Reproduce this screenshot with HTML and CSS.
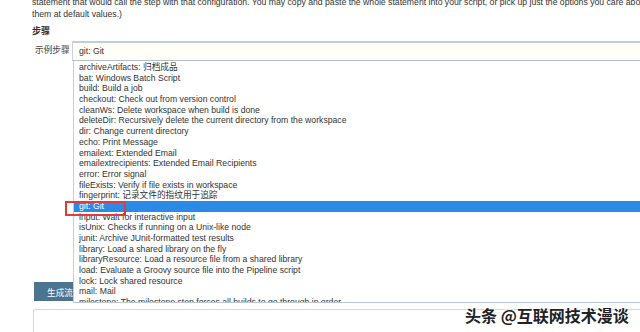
FILE: index.html
```html
<!DOCTYPE html>
<html lang="zh-CN">
<head>
    <meta charset="UTF-8">
    <title>Snippet Generator</title>
    <link rel="stylesheet" href="styles.css">
</head>
<body>
    <div class="page">
        <!-- 说明文字 -->
        <p class="intro">
            statement that would call the step with that configuration. You may copy and paste the whole statement into your script, or pick up just the options you care about. (Most parameters are optional)<br>
            them at default values.)
        </p>

        <div class="section-title">步骤</div>

        <!-- 示例步骤 选择框 -->
        <div class="step-row">
            <div class="step-label">示例步骤</div>
            <div class="step-select">git: Git</div>
        </div>

        <button class="gen-btn">生成流水线脚本</button>
        <div class="script-box"></div>
    </div>

    <!-- 下拉列表 -->
    <ul class="dropdown">
        <li>archiveArtifacts: 归档成品</li>
        <li>bat: Windows Batch Script</li>
        <li>build: Build a job</li>
        <li>checkout: Check out from version control</li>
        <li>cleanWs: Delete workspace when build is done</li>
        <li>deleteDir: Recursively delete the current directory from the workspace</li>
        <li>dir: Change current directory</li>
        <li>echo: Print Message</li>
        <li>emailext: Extended Email</li>
        <li>emailextrecipients: Extended Email Recipients</li>
        <li>error: Error signal</li>
        <li>fileExists: Verify if file exists in workspace</li>
        <li>fingerprint: 记录文件的指纹用于追踪</li>
        <li class="selected">git: Git</li>
        <li>input: Wait for interactive input</li>
        <li>isUnix: Checks if running on a Unix-like node</li>
        <li>junit: Archive JUnit-formatted test results</li>
        <li>library: Load a shared library on the fly</li>
        <li>libraryResource: Load a resource file from a shared library</li>
        <li>load: Evaluate a Groovy source file into the Pipeline script</li>
        <li>lock: Lock shared resource</li>
        <li>mail: Mail</li>
        <li>milestone: The milestone step forces all builds to go through in order</li>
    </ul>

    <!-- 红色标注框 -->
    <div class="mark"></div>

    <div class="watermark">头条 @互联网技术漫谈</div>
</body>
</html>
```

FILE: styles.css
```css
/* 전체 */
body {
    margin: 0;
    width: 640px;
    height: 332px;
    overflow: hidden;
    position: relative;
    background: #fff;
    font-family: "Liberation Sans", Arial, "Noto Sans CJK SC", sans-serif;
    font-size: 8.67px;
    color: #333;
}

.page {
    padding-left: 32px;
}

.intro {
    margin: -4.5px 0 0 0;
    line-height: 12px;
    white-space: nowrap;
}

.section-title {
    margin-top: 5.5px;
    line-height: 12px;
    font-weight: bold;
    font-size: 9px;
}

/* 示例步骤 */
.step-row {
    display: flex;
    margin-top: 4px;
}

.step-label {
    width: 37px;
    padding: 3px 0 0 3px;
    line-height: 12px;
    color: #444;
}

.step-select {
    flex: 1;
    height: 17px;
    line-height: 17px;
    padding-left: 6px;
    border-top: 2px solid #bccfdb;
    border-bottom: 1px solid #b3bec8;
    border-left: 1px solid #c9d4dc;
    background: #fffff8;
    margin-right: -10px;
}

/* 生成按钮 */
.gen-btn {
    display: block;
    margin: 221px 0 0 2px;
    width: 88px;
    height: 19px;
    border: none;
    padding: 0 0 0 13px;
    text-align: left;
    background: #4b7490;
    color: #fff;
    font-family: "Noto Sans CJK SC", sans-serif;
    font-size: 8.67px;
}

.script-box {
    margin: 8px -10px 0 1px;
    height: 40px;
    border: 1px solid #d6d6d6;
    border-radius: 2px;
}

/* 下拉列表 */
.dropdown {
    position: absolute;
    top: 61px;
    left: 73px;
    width: 580px;
    height: 240px;
    margin: 0;
    padding: 1px 0 0 0;
    list-style: none;
    overflow: hidden;
    background: #fff;
    border-left: 1px solid #c4cfd8;
    border-bottom: 1px solid #b9c6d0;
}

.dropdown li {
    height: 10.7px;
    line-height: 10.7px;
    padding-left: 5px;
    white-space: nowrap;
}

.dropdown li.selected {
    background: #2a8ae6;
    color: #fff;
}

.mark {
    position: absolute;
    left: 65px;
    top: 201px;
    width: 57px;
    height: 11px;
    border: 2px solid #e23b3b;
}

.watermark {
    position: absolute;
    left: 465px;
    top: 303px;
    font-family: "Noto Sans CJK SC", sans-serif;
    font-size: 16px;
    font-weight: 700;
    color: #222;
    white-space: nowrap;
    text-shadow: 0 0 2px #fff, 0 0 2px #fff, 0 0 3px #fff;
}
```
